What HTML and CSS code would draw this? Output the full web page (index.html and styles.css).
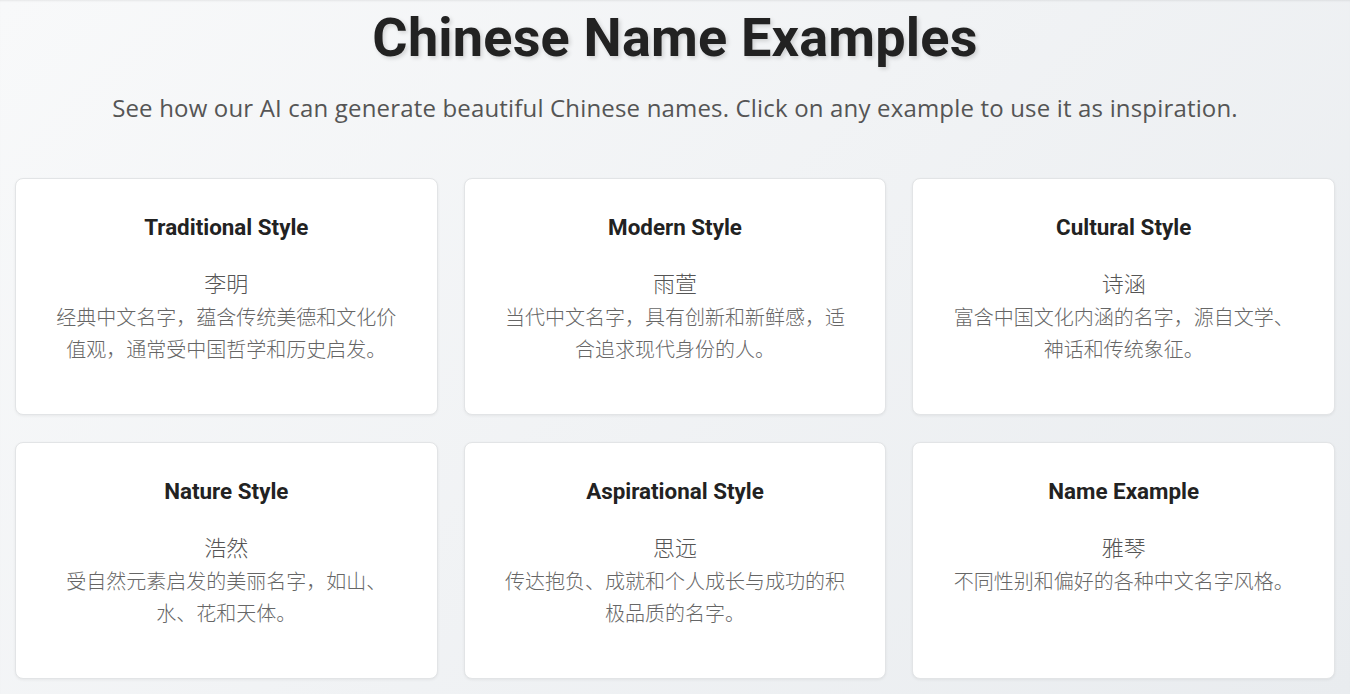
FILE: index.html
```html
<!DOCTYPE html>
<html lang="zh-CN">
<head>
    <meta charset="UTF-8">
    <meta name="viewport" content="width=device-width, initial-scale=1.0">
    <title>Chinese Name Examples</title>
    <link rel="stylesheet" href="styles.css">
</head>
<body>
    <section class="examples">
        <h1>Chinese Name Examples</h1>
        <p class="lead">See how our AI can generate beautiful Chinese names. Click on any example to use it as inspiration.</p>

        <div class="example-grid">
            <div class="example-card">
                <h3>Traditional Style</h3>
                <div class="name">李明</div>
                <p class="desc">经典中文名字，蕴含传统美德和文化价值观，通常受中国哲学和历史启发。</p>
            </div>
            <div class="example-card">
                <h3>Modern Style</h3>
                <div class="name">雨萱</div>
                <p class="desc">当代中文名字，具有创新和新鲜感，适合追求现代身份的人。</p>
            </div>
            <div class="example-card">
                <h3>Cultural Style</h3>
                <div class="name">诗涵</div>
                <p class="desc">富含中国文化内涵的名字，源自文学、神话和传统象征。</p>
            </div>
            <div class="example-card">
                <h3>Nature Style</h3>
                <div class="name">浩然</div>
                <p class="desc">受自然元素启发的美丽名字，如山、水、花和天体。</p>
            </div>
            <div class="example-card">
                <h3>Aspirational Style</h3>
                <div class="name">思远</div>
                <p class="desc">传达抱负、成就和个人成长与成功的积极品质的名字。</p>
            </div>
            <div class="example-card">
                <h3>Name Example</h3>
                <div class="name">雅琴</div>
                <p class="desc">不同性别和偏好的各种中文名字风格。</p>
            </div>
        </div>
    </section>
</body>
</html>
```

FILE: styles.css
```css
body {
    margin: 0;
    font-family: "Open Sans", "Noto Sans CJK SC", sans-serif;
    background: linear-gradient(135deg, #f8f9fa 0%, #e9ecef 100%);
    min-height: 100vh;
    box-shadow: inset 0 2px 3px -2px rgba(0,0,0,0.15);
}
.examples {
    padding: 0 15px 16px;
    text-align: center;
}
h1 {
    font-family: Roboto, sans-serif;
    font-size: 54px;
    font-weight: 700;
    color: #222;
    margin: 0;
    padding-top: 5px;
    line-height: 66px;
    letter-spacing: 0.2px;
    text-shadow: 2px 2px 4px rgba(0,0,0,0.15);
}
.lead {
    font-size: 24px;
    letter-spacing: 0.17px;
    color: #555;
    margin: 20px 0 54px;
}
.example-grid {
    display: grid;
    grid-template-columns: repeat(3, 1fr);
    gap: 27px 26px;
}
.example-card {
    background: white;
    border: 1px solid #e2e4e6;
    border-radius: 8px;
    box-shadow: 0 1px 3px rgba(0,0,0,0.06);
    padding: 35px 39px 0;
    height: 237px;
    box-sizing: border-box;
}
.example-card h3 {
    font-family: Roboto, sans-serif;
    font-size: 22.4px;
    font-weight: 700;
    color: #222;
    margin: 0 0 29px;
}
.name {
    font-family: "Noto Sans CJK SC", sans-serif;
    font-size: 22px;
    font-weight: 300;
    color: #555;
    line-height: 26px;
}
.desc {
    font-family: "Noto Sans CJK SC", sans-serif;
    font-size: 20px;
    font-weight: 300;
    line-height: 32px;
    color: #666;
    margin: 6px 0 0;
}
```
